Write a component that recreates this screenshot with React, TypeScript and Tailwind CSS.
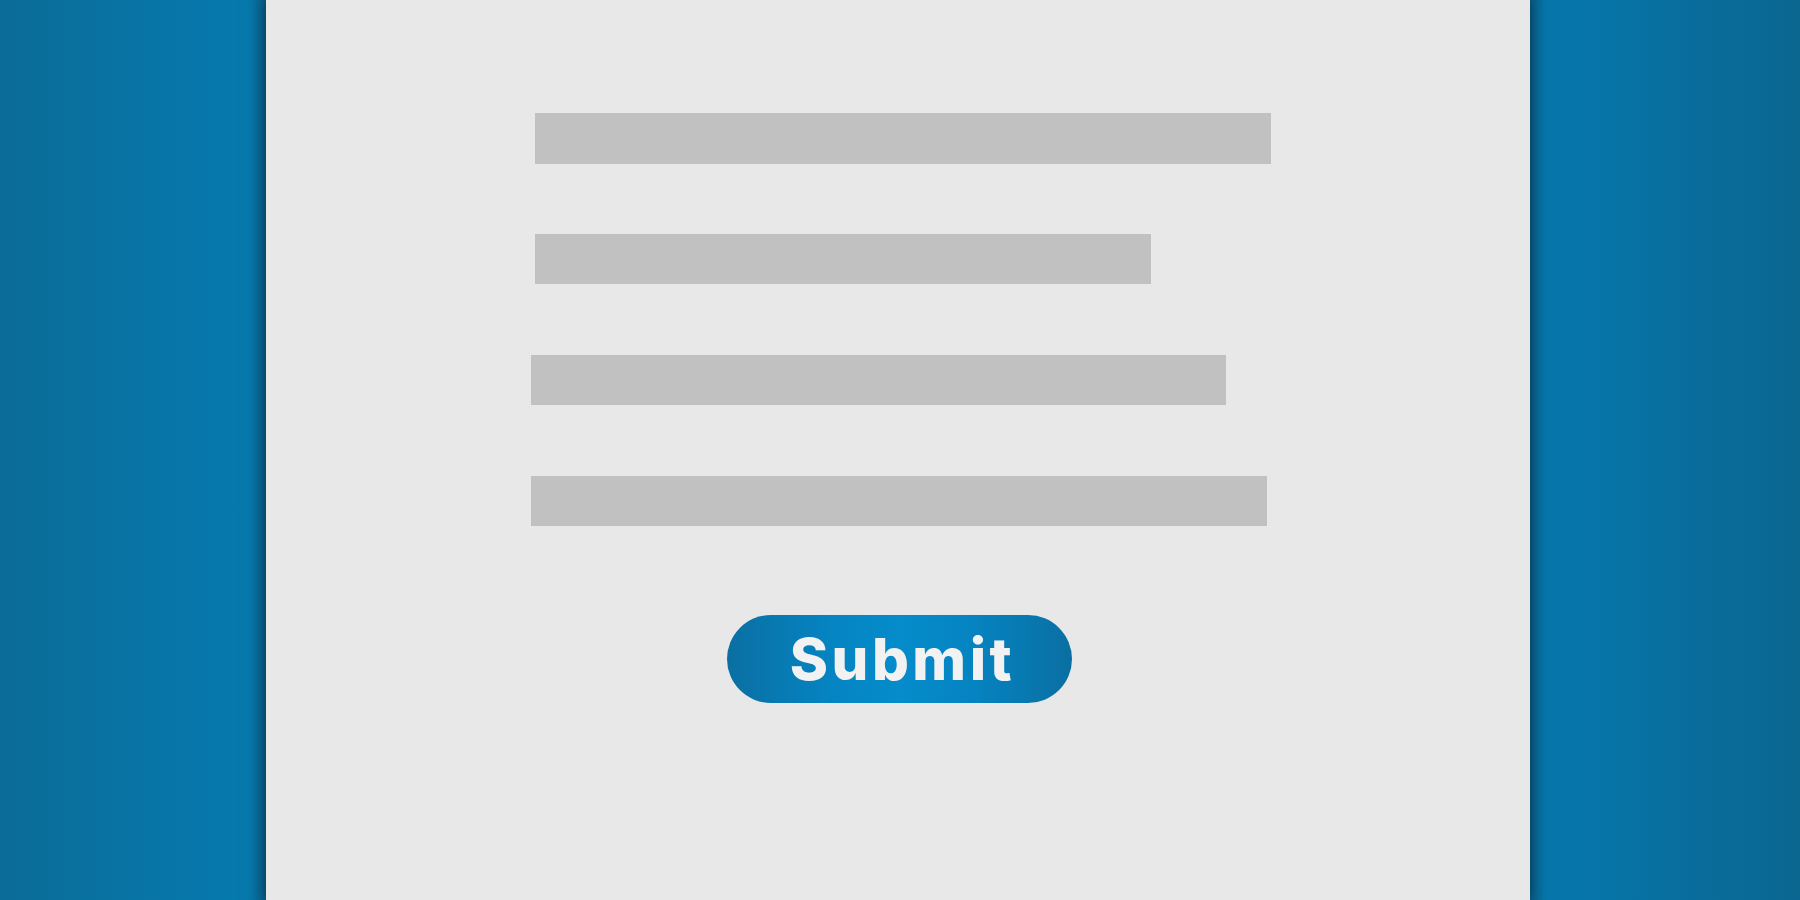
export default function App() {
  return (
    <div className="flex h-[900px] w-[1800px] overflow-hidden bg-[#0a6d9a]">
      <div className="h-full w-[266px] shrink-0 bg-[linear-gradient(to_right,#0b6c98,#0679ad_88%,#0677a9_94%,#0a5a82)]" />
      <div className="relative z-10 flex h-full w-[1264px] shrink-0 flex-col bg-[#e8e8e8] shadow-[0_0_12px_rgba(0,30,50,0.55)]">
        <div className="ml-[269px] mt-[113px] h-[51px] w-[736px] bg-[#c1c1c1]" />
        <div className="ml-[269px] mt-[70px] h-[50px] w-[616px] bg-[#c1c1c1]" />
        <div className="ml-[265px] mt-[71px] h-[50px] w-[695px] bg-[#c1c1c1]" />
        <div className="ml-[265px] mt-[71px] h-[50px] w-[736px] bg-[#c1c1c1]" />
        <div className="ml-[461px] mt-[89px] flex h-[88px] w-[345px] items-center justify-center rounded-full bg-[linear-gradient(to_right,#0a6fa2,#0584c2_30%,#058ccb_50%,#0584c2_70%,#0a6fa2)]">
          <span
            className="pl-[6px] text-[58px] font-extrabold leading-none tracking-[3.5px] text-[#f2f2f2]"
            style={{ fontFamily: '"Inter", "Noto Sans", sans-serif' }}
          >
            Submit
          </span>
        </div>
      </div>
      <div className="h-full flex-1 bg-[linear-gradient(to_right,#0a5c86,#0676aa_6%,#0675a9_20%,#0b6690)]" />
    </div>
  );
}
